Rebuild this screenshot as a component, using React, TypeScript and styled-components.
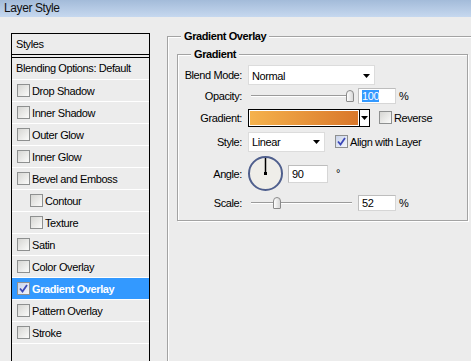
import React from "react";
import styled, { createGlobalStyle } from "styled-components";

const GlobalStyle = createGlobalStyle`
  html, body {
    margin: 0;
    padding: 0;
    background: #ececec;
  }
  body {
    font-family: "Liberation Sans", Arial, sans-serif;
    font-size: 11px;
    letter-spacing: -0.4px;
    color: #000;
  }
`;

const Window = styled.div`
  width: 471px;
  height: 361px;
  overflow: hidden;
  background: #ececec;
  display: flex;
  flex-direction: column;
`;

const TitleBar = styled.div`
  height: 17px;
  flex: none;
  padding-left: 4px;
  font-size: 12px;
  line-height: 17px;
  color: #111;
  background: linear-gradient(to bottom, #a3bbd9, #c6d8ef);
`;

const Main = styled.div`
  flex: 1;
  display: flex;
  align-items: flex-start;
  padding-left: 11px;
  min-height: 0;
`;

const Sidebar = styled.div`
  width: 139px;
  height: 340px;
  margin-top: 16px;
  box-sizing: border-box;
  border: 1px solid #000;
  border-bottom: none;
  flex: none;
`;

const StylesHeader = styled.div`
  height: 20px;
  line-height: 20px;
  padding-left: 4px;
  border-bottom: 1px solid #000;
`;

const BlendRow = styled.div`
  margin-top: 2px;
  border-top: 1px solid #000;
  height: 21px;
  line-height: 21px;
  padding-left: 4px;
  border-bottom: 1px solid #fff;
`;

const StyleRow = styled.div<{ $indent?: boolean; $active?: boolean }>`
  height: 21px;
  border-bottom: 1px solid #fff;
  display: flex;
  align-items: center;
  gap: 1px;
  padding-left: ${(p) => (p.$indent ? 18 : 5)}px;
  background: ${(p) => (p.$active ? "#3399ff" : "transparent")};
  color: ${(p) => (p.$active ? "#fff" : "#000")};
  font-weight: ${(p) => (p.$active ? "bold" : "normal")};
`;

const Box = styled.span<{ $checked?: boolean }>`
  width: 13px;
  height: 13px;
  box-sizing: border-box;
  border: 1px solid #8e9090;
  background: ${(p) =>
    p.$checked
      ? "linear-gradient(135deg, #c9d3ea, #f4f6fb)"
      : "linear-gradient(135deg, #d6d6d3, #fbfbfa)"};
  display: inline-flex;
  align-items: center;
  justify-content: center;
  flex: none;
  margin-right: 1px;
`;

const Panel = styled.div`
  margin-left: 17px;
  margin-top: 13px;
  flex: none;
`;

const Group = styled.fieldset<{ $w: number; $h: number; $ml?: number; $mt?: number }>`
  margin: ${(p) => p.$mt ?? 0}px 0 0 ${(p) => p.$ml ?? 0}px;
  padding: 0;
  width: ${(p) => p.$w}px;
  height: ${(p) => p.$h}px;
  box-sizing: border-box;
  border: 1px solid #a3a3a3;
  box-shadow: inset 1px 1px 0 #fff, 1px 1px 0 #fff;
  min-width: 0;
`;

const Legend = styled.legend`
  margin-left: 13px;
  padding: 0 3px;
  font-weight: bold;
  line-height: 13px;
  background: #ececec;
`;

const Form = styled.div`
  padding-top: 4px;
  display: flex;
  flex-direction: column;
`;

const Row = styled.div<{ $h: number }>`
  height: ${(p) => p.$h}px;
  display: grid;
  grid-template-columns: 64px auto;
  column-gap: 6px;
  align-items: center;
`;

const Label = styled.span`
  text-align: right;
  white-space: nowrap;
`;

const Controls = styled.div`
  display: flex;
  align-items: center;
`;

const Select = styled.div<{ $w: number; $mr?: number }>`
  width: ${(p) => p.$w}px;
  height: 20px;
  margin-right: ${(p) => p.$mr ?? 0}px;
  box-sizing: border-box;
  background: #fff;
  border: 1px solid #dcdcdc;
  display: flex;
  align-items: center;
  justify-content: space-between;
  padding: 1px 4px 0 3px;
`;

const SliderWrap = styled.div`
  position: relative;
  width: 104px;
  height: 14px;
  margin-right: 6px;
`;

const Track = styled.div`
  position: absolute;
  left: 3px;
  right: 0;
  top: 6px;
  height: 1px;
  background: #9b9b9b;
  border-bottom: 1px solid #fff;
`;

const Thumb = styled.div`
  position: absolute;
  top: 1px;
  width: 8px;
  height: 12px;
  box-sizing: border-box;
  border: 1px solid #8a8a8a;
  border-radius: 4px 4px 1px 1px;
  background: linear-gradient(to right, #fdfdfd, #d8d8d8);
`;

const NumField = styled.div<{ $w: number; $h: number }>`
  width: ${(p) => p.$w}px;
  height: ${(p) => p.$h}px;
  box-sizing: border-box;
  background: #fff;
  border: 1px solid #d6d6d6;
  border-top-color: #bdbdbd;
  border-left-color: #bdbdbd;
  display: flex;
  align-items: center;
  padding-left: 3px;
`;

const Selected = styled.span`
  background: #3399ff;
  color: #fff;
`;

const Unit = styled.span`
  margin-left: 3px;
`;

const Degree = styled.span`
  margin-left: 8px;
  margin-top: -1px;
`;

const GradientPicker = styled.div`
  width: 122px;
  height: 18px;
  box-sizing: border-box;
  border: 1px solid #000;
  display: flex;
  margin-right: 9px;
`;

const Swatch = styled.div`
  flex: 1;
  border: 1px solid #fff;
  background: linear-gradient(to right, #f5b24c, #d9772a);
`;

const SwatchArrow = styled.div`
  width: 9px;
  border-left: 1px solid #000;
  background: #fff;
  display: flex;
  align-items: center;
  justify-content: center;
`;

const CheckLabel = styled.label`
  display: flex;
  align-items: center;
  gap: 1px;
`;

const Dial = styled.div`
  width: 35px;
  height: 35px;
  box-sizing: border-box;
  border-radius: 50%;
  border: 2px solid #4f5f8d;
  background: #efeee9;
  margin-right: 5px;
  flex: none;
  display: flex;
  align-items: center;
  justify-content: center;
`;

const Arrow = () => (
  <svg width="7" height="4" viewBox="0 0 7 4">
    <path d="M0 0h7L3.5 4z" fill="#000" />
  </svg>
);

const Checkbox = ({ checked }: { checked?: boolean }) => (
  <Box $checked={checked}>
    {checked && (
      <svg width="9" height="9" viewBox="0 0 9 9">
        <path d="M1 4.5L3.5 7.5L8 1" fill="none" stroke="#3b48b8" strokeWidth="1.8" />
      </svg>
    )}
  </Box>
);

const Slider = ({ pos }: { pos: number }) => (
  <SliderWrap>
    <Track />
    <Thumb style={{ left: pos }} />
  </SliderWrap>
);

const effects = [
  { name: "Drop Shadow" },
  { name: "Inner Shadow" },
  { name: "Outer Glow" },
  { name: "Inner Glow" },
  { name: "Bevel and Emboss" },
  { name: "Contour", indent: true },
  { name: "Texture", indent: true },
  { name: "Satin" },
  { name: "Color Overlay" },
  { name: "Gradient Overlay", active: true },
  { name: "Pattern Overlay" },
  { name: "Stroke" },
];

export default function App() {
  return (
    <Window>
      <GlobalStyle />
      <TitleBar>Layer Style</TitleBar>
      <Main>
        <Sidebar>
          <StylesHeader>Styles</StylesHeader>
          <BlendRow>Blending Options: Default</BlendRow>
          {effects.map((e) => (
            <StyleRow key={e.name} $indent={e.indent} $active={e.active}>
              <Checkbox checked={e.active} />
              {e.name}
            </StyleRow>
          ))}
        </Sidebar>
        <Panel>
          <Group $w={320} $h={340}>
            <Legend>Gradient Overlay</Legend>
            <Group $w={291} $h={173} $ml={9} $mt={5}>
              <Legend>Gradient</Legend>
              <Form>
                <Row $h={20}>
                  <Label>Blend Mode:</Label>
                  <Controls>
                    <Select $w={127}>
                      Normal
                      <Arrow />
                    </Select>
                  </Controls>
                </Row>
                <Row $h={22}>
                  <Label>Opacity:</Label>
                  <Controls>
                    <Slider pos={98} />
                    <NumField $w={38} $h={16}>
                      <Selected>100</Selected>
                    </NumField>
                    <Unit>%</Unit>
                  </Controls>
                </Row>
                <Row $h={21}>
                  <Label>Gradient:</Label>
                  <Controls>
                    <GradientPicker>
                      <Swatch />
                      <SwatchArrow>
                        <Arrow />
                      </SwatchArrow>
                    </GradientPicker>
                    <CheckLabel>
                      <Checkbox />
                      Reverse
                    </CheckLabel>
                  </Controls>
                </Row>
                <Row $h={27}>
                  <Label>Style:</Label>
                  <Controls>
                    <Select $w={77} $mr={10}>
                      Linear
                      <Arrow />
                    </Select>
                    <CheckLabel>
                      <Checkbox checked />
                      Align with Layer
                    </CheckLabel>
                  </Controls>
                </Row>
                <Row $h={37}>
                  <Label>Angle:</Label>
                  <Controls>
                    <Dial>
                      <svg width="31" height="31" viewBox="0 0 31 31">
                        <line x1="15.5" y1="15.5" x2="15.5" y2="0" stroke="#000" strokeWidth="1.5" />
                        <rect x="14" y="14" width="3" height="3" fill="#000" />
                      </svg>
                    </Dial>
                    <NumField $w={40} $h={18}>90</NumField>
                    <Degree>°</Degree>
                  </Controls>
                </Row>
                <Row $h={22}>
                  <Label>Scale:</Label>
                  <Controls>
                    <Slider pos={25} />
                    <NumField $w={38} $h={16}>52</NumField>
                    <Unit>%</Unit>
                  </Controls>
                </Row>
              </Form>
            </Group>
          </Group>
        </Panel>
      </Main>
    </Window>
  );
}
